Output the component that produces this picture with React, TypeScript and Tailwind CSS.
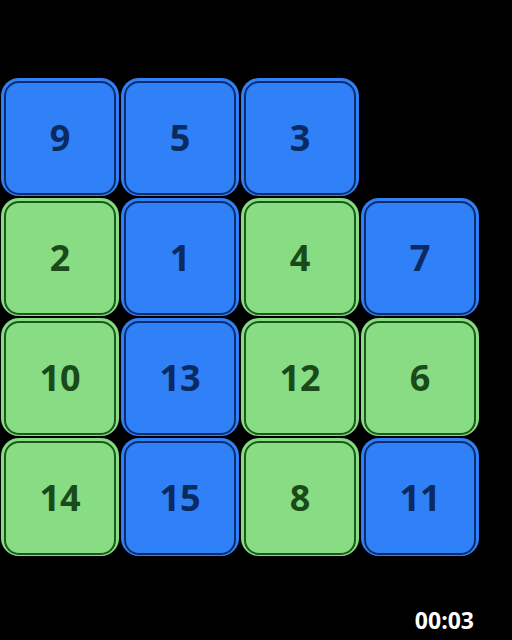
import React from "react"

type Tile = { n: number; green: boolean } | null

// board state, row by row; null is the empty slot
const board: Tile[] = [
  { n: 9, green: false },
  { n: 5, green: false },
  { n: 3, green: false },
  null,
  { n: 2, green: true },
  { n: 1, green: false },
  { n: 4, green: true },
  { n: 7, green: false },
  { n: 10, green: true },
  { n: 13, green: false },
  { n: 12, green: true },
  { n: 6, green: true },
  { n: 14, green: true },
  { n: 15, green: false },
  { n: 8, green: true },
  { n: 11, green: false },
]

function Piece({ tile }: { tile: Tile }) {
  if (!tile) return <div className="h-[118px] w-[118px]" />
  const outer = tile.green ? "bg-[#88dc84]" : "bg-[#3080f8]"
  const inner = tile.green ? "border-[#1c5a1c] text-[#1a4a1a]" : "border-[#0c2e6e] text-[#0b2a60]"
  return (
    <div className={`h-[118px] w-[118px] rounded-[18px] p-[3px] pb-[1px] ${outer}`}>
      <div
        className={`flex h-full w-full items-center justify-center rounded-[15px] border-2 text-[36px] font-bold ${inner}`}
        style={{ fontFamily: "'Open Sans', sans-serif" }}
      >
        {tile.n}
      </div>
    </div>
  )
}

export default function App() {
  return (
    <div className="flex h-[640px] w-[512px] flex-col bg-black">
      <div className="grid grid-cols-[repeat(4,118px)] gap-[2px] pl-[1px] pt-[78px]">
        {board.map((t, i) => (
          <Piece key={i} tile={t} />
        ))}
      </div>
      <div className="mt-auto flex justify-end pb-[8px] pr-[38px]">
        <span
          className="text-[23px] font-bold leading-none text-white"
          style={{ fontFamily: "'Open Sans', sans-serif" }}
        >
          00:03
        </span>
      </div>
    </div>
  )
}
